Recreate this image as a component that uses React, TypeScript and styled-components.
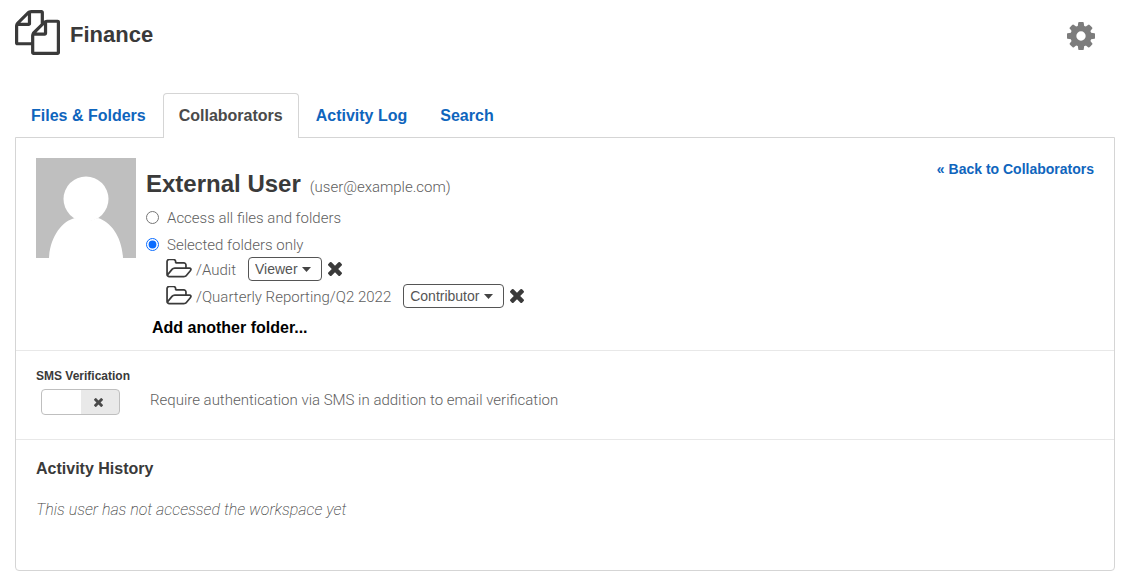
import React, { useState } from "react";
import styled, { createGlobalStyle } from "styled-components";

const sans = '"Liberation Sans", Arial, sans-serif';
const light = 'Roboto, "Liberation Sans", sans-serif';
const ink = "#3a3a3a";
const blue = "#0f65bd";
const line = "#d5d5d5";

const GlobalStyle = createGlobalStyle`
  *, *::before, *::after { box-sizing: border-box; }
  body {
    margin: 0;
    background: #fff;
    color: ${ink};
    font-family: ${sans};
    font-size: 16px;
    line-height: 20px;
  }
`;

const Page = styled.main`
  padding: 10px 7px 6px 15px;
`;

const Header = styled.header`
  display: flex;
  align-items: flex-start;
  justify-content: space-between;
  height: 50px;
  padding-right: 20px;
  margin-bottom: 33px;
`;

const Workspace = styled.div`
  display: flex;
  align-items: flex-start;
  gap: 10px;
`;

const WorkspaceTitle = styled.h1`
  margin: 0;
  padding-top: 11px;
  font-size: 22px;
  line-height: 28px;
`;

const IconButton = styled.button`
  display: flex;
  padding: 0;
  border: 0;
  background: none;
  color: ${ink};
  cursor: pointer;
`;

const GearButton = styled(IconButton)`
  margin-top: 12px;
  color: #7c7c7c;
`;

const Tabs = styled.nav`
  display: flex;
  gap: 1px;
`;

const Tab = styled.a<{ $active?: boolean }>`
  padding: 12px 15px;
  height: ${(p) => (p.$active ? 45 : 44)}px;
  margin-bottom: ${(p) => (p.$active ? -1 : 0)}px;
  border: 1px solid ${(p) => (p.$active ? line : "transparent")};
  border-bottom: 0;
  border-radius: 4px 4px 0 0;
  background: #fff;
  color: ${(p) => (p.$active ? "#4a4a4a" : blue)};
  font-weight: bold;
  text-decoration: none;
`;

const Panel = styled.div`
  border: 1px solid ${line};
  border-radius: 0 0 4px 4px;
`;

const UserSection = styled.section`
  display: flex;
  align-items: flex-start;
  gap: 10px;
  padding: 20px 20px 12px;
`;

const Details = styled.div`
  flex: 1;
`;

const NameRow = styled.div`
  display: flex;
  align-items: baseline;
  gap: 9px;
  padding-top: 12px;
  margin-bottom: 6px;
`;

const UserName = styled.h2`
  margin: 0;
  font-size: 24px;
  line-height: 28px;
`;

const LightText = styled.span`
  padding-top: 1px;
  color: #606060;
  font-family: ${light};
  font-size: 15px;
  font-weight: 300;
`;

const BackLink = styled.a`
  margin-top: 1px;
  color: ${blue};
  font-size: 14px;
  font-weight: bold;
  text-decoration: none;
`;

const AccessList = styled.div`
  display: grid;
  gap: 1px;
`;

const AccessOption = styled.label`
  display: flex;
  align-items: center;
  gap: 8px;
  height: 26px;
`;

const Radio = styled.input`
  width: 13px;
  height: 13px;
  margin: 0;
  accent-color: #0a6cff;
`;

const FolderList = styled.ul`
  display: grid;
  gap: 3px;
  margin: 0;
  padding: 0 0 0 20px;
  list-style: none;
`;

const FolderRow = styled.li`
  display: flex;
  align-items: center;
  height: 24px;
`;

const FolderName = styled(LightText)`
  margin: 0 12px 0 4px;
`;

const RoleField = styled.span`
  display: grid;
  align-items: center;
  margin-right: 6px;

  & > * { grid-area: 1 / 1; }
  & > svg {
    justify-self: end;
    margin-right: 11px;
    pointer-events: none;
  }
`;

const RoleSelect = styled.select<{ $width: number }>`
  appearance: none;
  width: ${(p) => p.$width}px;
  height: 24px;
  padding: 0 0 0 6px;
  border: 1px solid #555;
  border-radius: 4px;
  background: #fff;
  color: #555;
  font-family: ${sans};
  font-size: 14px;
`;

const AddButton = styled.button`
  display: block;
  margin: 10px 0 0 6px;
  padding: 0;
  border: 0;
  background: none;
  color: #000;
  font: bold 16px/20px ${sans};
  cursor: pointer;
`;

const SmsSection = styled.section`
  padding: 17px 20px 24px;
  border-top: 1px solid #e8e8e8;
`;

const SmsTitle = styled.h3`
  margin: 0 0 5px;
  font-size: 12px;
  line-height: 16px;
`;

const SmsRow = styled.label`
  display: flex;
  align-items: flex-start;
  gap: 30px;
  padding-left: 5px;
`;

const Switch = styled.span`
  display: grid;
  align-items: center;

  & > * { grid-area: 1 / 1; }
  & > svg {
    margin-left: 53px;
    pointer-events: none;
  }
`;

const SwitchInput = styled.input`
  appearance: none;
  width: 79px;
  height: 26px;
  margin: 0;
  border: 1px solid #bfbfbf;
  border-radius: 4px;
  background: linear-gradient(to right, #fff 50%, #e9e9e9 50%);

  &:checked { background: linear-gradient(to right, ${blue} 50%, #fff 50%); }
`;

const HistorySection = styled.section`
  padding: 19px 20px 50px;
  border-top: 1px solid #e8e8e8;
`;

const HistoryTitle = styled.h3`
  margin: 0 0 20px;
  font-size: 16px;
`;

const Empty = styled(LightText)`
  display: block;
  font-size: 16px;
  font-style: italic;
  font-weight: 200;
  color: #444;
`;

const FilesIcon = () => (
  <svg width="45" height="45" viewBox="0 0 1792 1792" fill={ink} aria-hidden="true">
    <path d="M1696 384q40 0 68 28t28 68v1216q0 40-28 68t-68 28h-960q-40 0-68-28t-28-68v-288h-544q-40 0-68-28t-28-68v-672q0-40 20-88t48-76l408-408q28-28 76-48t88-20h416q40 0 68 28t28 68v328q68-40 128-40h416zm-544 213l-299 299h299v-299zm-640-384l-299 299h299v-299zm196 647l316-316v-416h-384v416q0 40-28 68t-68 28h-416v640h512v-256q0-40 20-88t48-76zm956 804v-1152h-384v416q0 40-28 68t-68 28h-416v640h896z" />
  </svg>
);

const GearIcon = () => (
  <svg width="28" height="28" viewBox="0 128 1536 1536" fill="currentColor" aria-hidden="true">
    <path d="M1024 896q0-106-75-181t-181-75-181 75-75 181 75 181 181 75 181-75 75-181zm512-109v222q0 12-8 23t-20 13l-185 28q-19 54-39 91 35 50 107 138 10 12 10 25t-9 23q-27 37-99 108t-94 71q-12 0-26-9l-138-108q-44 23-91 38-16 136-29 186-7 28-36 28h-222q-14 0-24.5-8.5t-11.5-21.5l-28-184q-49-16-90-37l-141 107q-10 9-25 9-14 0-25-11-126-114-165-168-7-10-7-23 0-12 8-23 15-21 51-66.5t54-70.5q-27-50-41-99l-183-27q-13-2-21-12.5t-8-23.5v-222q0-12 8-23t19-13l186-28q14-46 39-92-40-57-107-138-10-12-10-24 0-10 9-23 26-36 98.5-107.500t94.500-71.500q13 0 26 10l138 107q44-23 91-38 16-136 29-186 7-28 36-28h222q14 0 24.500 8.500t11.500 21.500l28 184q49 16 90 37l142-107q9-9 24-9 13 0 25 10 129 119 165 170 7 8 7 22 0 12-8 23-15 21-51 66.500t-54 70.500q26 50 41 98l183 28q13 2 21 12.500t8 23.500z" />
  </svg>
);

const FolderIcon = () => (
  <svg width="26" height="20" viewBox="50 160 1936 1489" fill={ink} aria-hidden="true">
    <path d="M1845 931q0-35-53-35h-1088q-40 0-85.500 21.500t-71.500 52.500l-294 363q-18 24-18 40 0 35 53 35h1088q40 0 86-22t71-53l294-363q18-22 18-39zm-1141-163h768v-160q0-40-28-68t-68-28h-576q-40 0-68-28t-28-68v-64q0-40-28-68t-68-28h-320q-40 0-68 28t-28 68v853l256-315q44-53 116-87.500t140-34.500zm1269 163q0 62-46 120l-295 363q-43 53-116 87.500t-140 34.500h-1088q-92 0-158-66t-66-158v-960q0-92 66-158t158-66h320q92 0 158 66t66 158v32h544q92 0 158 66t66 158v160h192q54 0 99 24.500t67 70.500q15 32 15 68z" />
  </svg>
);

const CrossIcon = ({ size, color = ink }: { size: number; color?: string }) => (
  <svg width={size} height={size} viewBox="302 366 1188 1188" fill={color} aria-hidden="true">
    <path d="M1490 1322q0 40-28 68l-136 136q-28 28-68 28t-68-28l-294-294-294 294q-28 28-68 28t-68-28l-136-136q-28-28-28-68t28-68l294-294-294-294q-28-28-28-68t28-68l136-136q28-28 68-28t68 28l294 294 294-294q28-28 68-28t68 28l136 136q28 28 28 68t-28 68l-294 294 294 294q28 28 28 68z" />
  </svg>
);

const Caret = () => (
  <svg width="9" height="5" viewBox="0 0 9 5" fill="#444" aria-hidden="true">
    <path d="M0 0h9L4.500 5z" />
  </svg>
);

const Avatar = () => (
  <svg width="100" height="100" viewBox="0 0 100 100" role="img" aria-label="User avatar">
    <rect width="100" height="100" fill="#bfbfbf" />
    <circle cx="50" cy="41" r="22.500" fill="#fff" />
    <path d="M13 100C14 79 26 63 39 60Q50 66 62 60C75 64 86 79 87 100z" fill="#fff" />
  </svg>
);

const tabs = ["Files & Folders", "Collaborators", "Activity Log", "Search"];

const folders = [
  { path: "/Audit", role: "Viewer", width: 74 },
  { path: "/Quarterly Reporting/Q2 2022", role: "Contributor", width: 101 },
];

export default function App() {
  const [access, setAccess] = useState("selected");

  return (
    <>
      <GlobalStyle />
      <Page>
        <Header>
          <Workspace>
            <FilesIcon />
            <WorkspaceTitle>Finance</WorkspaceTitle>
          </Workspace>
          <GearButton type="button" aria-label="Settings">
            <GearIcon />
          </GearButton>
        </Header>

        <Tabs>
          {tabs.map((t) => (
            <Tab key={t} href="#" $active={t === "Collaborators"}>
              {t}
            </Tab>
          ))}
        </Tabs>

        <Panel>
          <UserSection>
            <Avatar />
            <Details>
              <NameRow>
                <UserName>External User</UserName>
                <LightText>(user@example.com)</LightText>
              </NameRow>
              <AccessList>
                <AccessOption>
                  <Radio type="radio" name="access" checked={access === "all"} onChange={() => setAccess("all")} />
                  <LightText>Access all files and folders</LightText>
                </AccessOption>
                <AccessOption>
                  <Radio type="radio" name="access" checked={access === "selected"} onChange={() => setAccess("selected")} />
                  <LightText>Selected folders only</LightText>
                </AccessOption>
              </AccessList>
              <FolderList>
                {folders.map((f) => (
                  <FolderRow key={f.path}>
                    <FolderIcon />
                    <FolderName>{f.path}</FolderName>
                    <RoleField>
                      <RoleSelect $width={f.width} defaultValue={f.role} aria-label={`Role for ${f.path}`}>
                        <option>Viewer</option>
                        <option>Contributor</option>
                      </RoleSelect>
                      <Caret />
                    </RoleField>
                    <IconButton type="button" aria-label={`Remove ${f.path}`}>
                      <CrossIcon size={14} />
                    </IconButton>
                  </FolderRow>
                ))}
              </FolderList>
              <AddButton type="button">Add another folder...</AddButton>
            </Details>
            <BackLink href="#">« Back to Collaborators</BackLink>
          </UserSection>

          <SmsSection>
            <SmsTitle>SMS Verification</SmsTitle>
            <SmsRow>
              <Switch>
                <SwitchInput type="checkbox" />
                <CrossIcon size={9} color="#4a4a4a" />
              </Switch>
              <LightText>Require authentication via SMS in addition to email verification</LightText>
            </SmsRow>
          </SmsSection>

          <HistorySection>
            <HistoryTitle>Activity History</HistoryTitle>
            <Empty>This user has not accessed the workspace yet</Empty>
          </HistorySection>
        </Panel>
      </Page>
    </>
  );
}
